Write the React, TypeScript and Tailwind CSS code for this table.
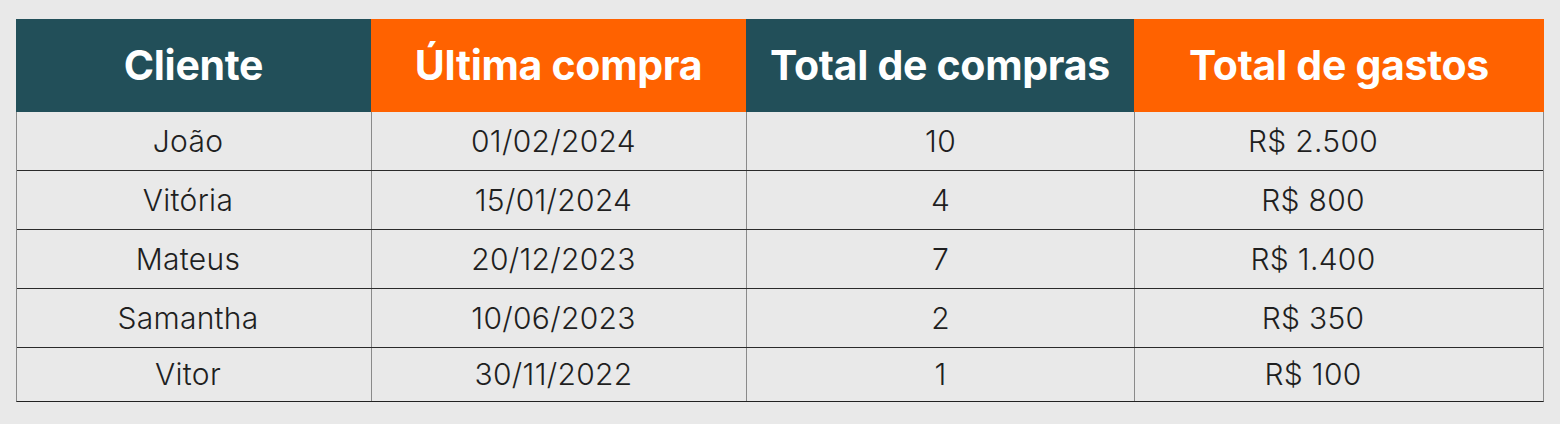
const HEADERS: { label: string; bg: string }[] = [
  { label: 'Cliente', bg: 'bg-[#224f59]' },
  { label: 'Última compra', bg: 'bg-[#ff6200]' },
  { label: 'Total de compras', bg: 'bg-[#224f59]' },
  { label: 'Total de gastos', bg: 'bg-[#ff6200]' },
];

const ROWS: [string, string, string, string][] = [
  ['João', '01/02/2024', '10', 'R$ 2.500'],
  ['Vitória', '15/01/2024', '4', 'R$ 800'],
  ['Mateus', '20/12/2023', '7', 'R$ 1.400'],
  ['Samantha', '10/06/2023', '2', 'R$ 350'],
  ['Vitor', '30/11/2022', '1', 'R$ 100'],
];

// o texto das células não fica exatamente centralizado na referência
const CELL_PAD = ['pr-[12px] border-r', 'pr-[11px] border-r', 'border-r', 'pr-[54px]'];

const COLS = 'grid grid-cols-[355px_375px_388px_410px]';

/** Tabela de clientes com última compra e totais */
export default function App() {
  return (
    <div className="h-[424px] w-[1560px] bg-[#e9e9e9] pl-4 pt-[19px] font-['Inter',sans-serif]">
      <div className="w-[1528px]">
        <div className={`${COLS} h-[93px]`}>
          {HEADERS.map((h) => (
            <div
              key={h.label}
              className={`${h.bg} flex items-center justify-center text-[41px] font-bold tracking-[-0.3px] text-white`}
            >
              {h.label}
            </div>
          ))}
        </div>
        <div className="border-b border-l border-r border-[#222] border-l-[#8a8a8a] border-r-[#8a8a8a]">
          {ROWS.map((row, idx) => (
            <div
              key={row[0]}
              className={`${COLS} ${idx === ROWS.length - 1 ? 'h-[53px]' : 'h-[59px] border-b border-[#2a2a2a]'}`}
            >
              {row.map((cell, ci) => (
                <div
                  key={ci}
                  className={`flex items-center justify-center border-[#8a8a8a] text-[30px] font-light tracking-[0.3px] text-[#1f1f1f] ${CELL_PAD[ci]}`}
                >
                  {cell}
                </div>
              ))}
            </div>
          ))}
        </div>
      </div>
    </div>
  );
}
